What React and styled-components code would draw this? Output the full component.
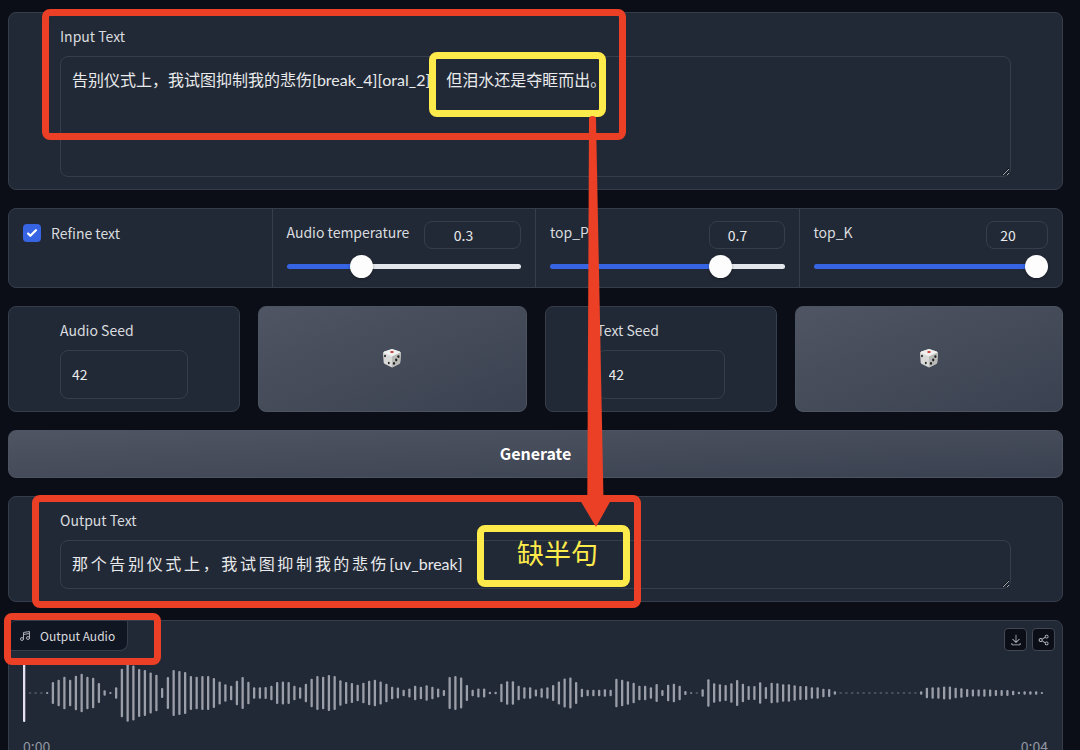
import { useState } from "react";
import styled, { createGlobalStyle } from "styled-components";
import { Music4 } from "lucide-react";

const GlobalStyle = createGlobalStyle`
  :root {
    --page: #0b0e17;
    --panel: #222936;
    --line: #363e4b;
    --text: #d9dbdf;
    --bright: #e8eaec;
    --accent: #3764e3;
    --red: #eb4025;
    --yellow: #fdea4b;
    color-scheme: dark;
  }

  * {
    box-sizing: border-box;
  }

  body {
    margin: 0;
    background: var(--page);
  }

  body, button, input {
    font-family: "Noto Sans CJK SC", "Noto Sans", sans-serif;
  }
`;

const Page = styled.div`
  position: relative;
  display: flex;
  flex-direction: column;
  gap: 18px;
  height: 100vh;
  padding: 12px 17px 0 8px;
  overflow: hidden;
  color: var(--text);
  font-size: 14px;
  line-height: 24px;

  > * {
    flex-shrink: 0;
  }
`;

const Panel = styled.section`
  display: flex;
  flex-direction: column;
  gap: 8px;
  padding: 11px 51px 12px;
  background: var(--panel);
  border: 1px solid var(--line);
  border-radius: 8px;
`;

const TextArea = styled.textarea`
  display: block;
  width: 100%;
  height: ${(props) => (props.$tall ? 121 : 49)}px;
  padding: 11px;
  overflow: hidden;
  color: var(--bright);
  background: transparent;
  border: 1px solid var(--line);
  border-radius: 8px;
  outline: none;
  font-family: Lato, "Noto Sans CJK SC", sans-serif;
  font-size: 16px;
  line-height: 24px;
  resize: vertical;
`;

const SeedInput = styled.input`
  width: 100%;
  height: 49px;
  padding: 0 11px 2px;
  color: var(--bright);
  background: transparent;
  border: 1px solid var(--line);
  border-radius: 8px;
  outline: none;
  font-size: 14px;
  appearance: textfield;

  &::-webkit-inner-spin-button {
    display: none;
  }
`;

const Settings = styled.section`
  display: grid;
  grid-template-columns: repeat(4, 1fr);
  gap: 1px;
  overflow: hidden;
  background: var(--line);
  border: 1px solid var(--line);
  border-radius: 8px;
`;

const Cell = styled.div`
  height: 78px;
  padding: 12px 14px;
  background: var(--panel);
`;

const CheckLabel = styled.label`
  display: flex;
  align-items: center;
  gap: 10px;
`;

const CheckBox = styled.input`
  width: 18px;
  height: 18px;
  margin: 0;
  appearance: none;
  border-radius: 4px;
  background: var(--accent)
    url("data:image/svg+xml,%3Csvg viewBox='0 0 16 16' fill='white' xmlns='http://www.w3.org/2000/svg'%3E%3Cpath d='M12.207 4.793a1 1 0 010 1.414l-5 5a1 1 0 01-1.414 0l-2-2a1 1 0 011.414-1.414L6.5 9.086l4.293-4.293a1 1 0 011.414 0z'/%3E%3C/svg%3E")
    center / 18px no-repeat;
`;

const SliderHead = styled.div`
  display: flex;
  justify-content: space-between;
  align-items: flex-start;
  height: 33px;

  label {
    line-height: 22px;
  }
`;

const NumberInput = styled.input`
  width: ${(props) => props.$width}px;
  height: 28px;
  padding: 0 18px 0 0;
  color: var(--bright);
  background: transparent;
  border: 1px solid var(--line);
  border-radius: 8px;
  outline: none;
  font-size: 14px;
  text-align: center;
  appearance: textfield;

  &::-webkit-inner-spin-button {
    display: none;
  }
`;

const Range = styled.input`
  display: block;
  width: 100%;
  height: 24px;
  margin: 0;
  appearance: none;
  background: transparent;

  &::-webkit-slider-runnable-track {
    height: 5px;
    border-radius: 3px;
    background: linear-gradient(
      to right,
      var(--accent) var(--fill),
      #e3e6ea var(--fill)
    );
  }

  &::-webkit-slider-thumb {
    width: 23px;
    height: 23px;
    margin-top: -9px;
    appearance: none;
    border-radius: 50%;
    background: #fdfdfd;
    box-shadow: 0 1px 3px rgba(0, 0, 0, 0.3);
  }
`;

const SeedRow = styled.div`
  display: grid;
  grid-template-columns: 232fr 268fr 232fr 268fr;
  gap: 18px;
`;

const Button = styled.button`
  display: flex;
  justify-content: center;
  align-items: center;
  min-height: 48px;
  padding: 0 0 2px;
  color: #fff;
  background: linear-gradient(to bottom right, #4f5562, #3a4150);
  border: 1px solid #4c5461;
  border-radius: 8px;
  font-size: 16px;
  font-weight: 600;
`;

const AudioPanel = styled.section`
  height: 190px;
  background: var(--panel);
  border: 1px solid var(--line);
  border-radius: 8px;
  overflow: hidden;
`;

const AudioBar = styled.div`
  display: flex;
  justify-content: space-between;
  align-items: flex-start;
  height: 43px;
`;

const AudioTag = styled.div`
  display: flex;
  align-items: center;
  gap: 9px;
  height: 30px;
  padding: 0 12px 0 10px;
  background: #111623;
  border-right: 1px solid var(--line);
  border-bottom: 1px solid var(--line);
  border-bottom-right-radius: 8px;
  color: var(--text);
  font-size: 12px;
`;

const Tools = styled.div`
  display: flex;
  gap: 5px;
  padding: 7px 7px 0 0;
`;

const ToolButton = styled.button`
  display: flex;
  justify-content: center;
  align-items: center;
  width: 23px;
  height: 23px;
  padding: 0;
  color: #c4c8ce;
  background: var(--page);
  border: 1px solid #424955;
  border-radius: 4px;
`;

const Wave = styled.svg`
  display: block;
  width: calc(100% - 28px);
  height: 58px;
  margin: 0 14px;
`;

const Times = styled.div`
  display: flex;
  justify-content: space-between;
  padding: 12px 14px;
  color: #9197a1;
  font-size: 14px;
`;

// hand drawn style markup lying over the page
const Mark = styled.div`
  position: absolute;
  display: flex;
  justify-content: center;
  align-items: center;
  left: ${(props) => props.$x}px;
  top: ${(props) => props.$y}px;
  width: ${(props) => props.$w}px;
  height: ${(props) => props.$h}px;
  padding: 0 0 6px 8px;
  border: 7px solid var(--${(props) => props.$color});
  border-radius: 8px;
  color: var(--yellow);
  font-size: 27px;
  pointer-events: none;
`;

const Arrow = styled.svg`
  position: absolute;
  left: 580px;
  top: 115px;
  pointer-events: none;
`;

const sliders = [
  { id: "temperature", label: "Audio temperature", min: 0, max: 1, step: 0.1, start: 0.3, width: 97 },
  { id: "top-p", label: "top_P", min: 0.1, max: 0.9, step: 0.1, start: 0.7, width: 76 },
  { id: "top-k", label: "top_K", min: 1, max: 20, step: 1, start: 20, width: 62 },
];

// words come back one by one, joined with narrow spaces
const output = [..."那个告别仪式上，我试图抑制我的悲伤", "[uv_break]"].join("\u2006");

// bar heights, in thirds of a pixel
const bars = [
  174, 2, 2, 2, 6, 66, 79, 97, 79, 103, 116, 97, 91, 60, 17, 6, 35, 145, 172,
  165, 144, 138, 123, 109, 30, 96, 138, 132, 126, 102, 97, 102, 102, 90, 69,
  52, 44, 74, 96, 68, 35, 35, 36, 44, 66, 69, 66, 44, 34, 56, 85, 102, 98, 108,
  102, 76, 66, 60, 50, 62, 73, 79, 69, 55, 38, 33, 20, 27, 44, 38, 46, 37, 27,
  18, 96, 102, 93, 48, 19, 27, 27, 8, 8, 55, 70, 71, 44, 35, 34, 21, 28, 34,
  48, 69, 87, 93, 66, 26, 20, 20, 20, 22, 20, 85, 79, 70, 62, 44, 43, 35, 54,
  18, 50, 56, 44, 12, 5, 2, 22, 83, 58, 52, 48, 58, 78, 55, 42, 42, 64, 36, 62,
  59, 52, 52, 46, 42, 42, 35, 35, 26, 24, 10, 2, 2, 2, 2, 2, 2, 2, 2, 2, 2, 2,
  2, 2, 2, 10, 31, 35, 35, 39, 39, 31, 28, 24, 21, 21, 22, 21, 18, 18, 18, 14,
  8, 10, 10, 10, 6,
];

const Slider = ({ id, label, min, max, step, start, width }) => {
  const [value, setValue] = useState(start);
  const fill = ((value - min) / (max - min)) * 100;
  const change = (e) => setValue(e.target.value);

  return (
    <Cell>
      <SliderHead>
        <label htmlFor={id}>{label}</label>
        <NumberInput
          id={id}
          type="number"
          min={min}
          max={max}
          step={step}
          value={value}
          onChange={change}
          $width={width}
        />
      </SliderHead>
      <Range
        type="range"
        aria-label={label}
        min={min}
        max={max}
        step={step}
        value={value}
        onChange={change}
        style={{ "--fill": `${fill}%` }}
      />
    </Cell>
  );
};

const Dice = () => (
  <svg width="20" height="20" viewBox="0 0 20 20">
    <path d="M10 1 17.6 3.4Q19 4 18.9 5.4L18.2 14.2Q18 15.3 17 15.9L11 19Q10 19.4 9 19L2.8 16Q1.8 15.4 1.7 14.2L1 5.4Q1 4 2.4 3.4Z" fill="#d9dad7" />
    <path d="M10 1 17.6 3.4Q19 4 18 4.9L10 8.4 2 4.9Q1 4 2.4 3.4Z" fill="#f0f0ee" />
    <path d="M10 8.4 18.4 4.6Q19 5 18.9 5.8L18.2 14.2Q18 15.3 17 15.9L10.6 19.2Q10 19.3 9.8 19Z" fill="#b9bab6" />
    <ellipse cx="10" cy="4" rx="1.8" ry="0.9" fill="#c93b36" />
    <g fill="#202124">
      <ellipse cx="3" cy="8" rx="0.9" ry="1.3" />
      <ellipse cx="6.8" cy="15" rx="0.9" ry="1.3" />
      <ellipse cx="16.4" cy="8.6" rx="1.1" ry="1.4" />
      <ellipse cx="14.2" cy="12" rx="1.1" ry="1.4" />
      <ellipse cx="12" cy="15.4" rx="1.1" ry="1.4" />
    </g>
  </svg>
);

const Seed = ({ id, label }) => (
  <>
    <Panel>
      <label htmlFor={id}>{label}</label>
      <SeedInput id={id} type="number" defaultValue={42} />
    </Panel>
    <Button aria-label={`Random ${label}`}>
      <Dice />
    </Button>
  </>
);

const App = () => {
  return (
    <Page>
      <GlobalStyle />
      <Panel>
        <label htmlFor="input-text">Input Text</label>
        <TextArea
          id="input-text"
          $tall
          spellCheck={false}
          defaultValue="告别仪式上，我试图抑制我的悲伤[break_4][oral_2]，但泪水还是夺眶而出。"
        />
      </Panel>

      <Settings>
        <Cell>
          <CheckLabel>
            <CheckBox type="checkbox" defaultChecked />
            Refine text
          </CheckLabel>
        </Cell>
        {sliders.map((slider) => (
          <Slider key={slider.id} {...slider} />
        ))}
      </Settings>

      <SeedRow>
        <Seed id="audio-seed" label="Audio Seed" />
        <Seed id="text-seed" label="Text Seed" />
      </SeedRow>

      <Button>Generate</Button>

      <Panel>
        <label htmlFor="output-text">Output Text</label>
        <TextArea id="output-text" readOnly spellCheck={false} value={output} />
      </Panel>

      <AudioPanel>
        <AudioBar>
          <AudioTag>
            <Music4 size={12} strokeWidth={2} color="#a9adb5" />
            Output Audio
          </AudioTag>
          <Tools>
            <ToolButton aria-label="Download">
              <svg width="12" height="12" viewBox="0 0 32 32" fill="currentColor">
                <path d="M26 24v4H6v-4H4v4a2 2 0 0 0 2 2h20a2 2 0 0 0 2-2v-4zm0-10l-1.41-1.41L17 20.17V2h-2v18.17l-7.59-7.58L6 14l10 10z" />
              </svg>
            </ToolButton>
            <ToolButton aria-label="Share">
              <svg width="12" height="12" viewBox="0 0 32 32" fill="currentColor">
                <path d="M23 20a5 5 0 0 0-3.89 1.89l-7.31-4.57a4.46 4.46 0 0 0 0-2.64l7.31-4.57A5 5 0 1 0 18 7a4.79 4.79 0 0 0 .2 1.32l-7.31 4.57a5 5 0 1 0 0 6.22l7.31 4.57A4.79 4.79 0 0 0 18 25a5 5 0 1 0 5-5Zm0-16a3 3 0 1 1-3 3a3 3 0 0 1 3-3ZM7 19a3 3 0 1 1 3-3a3 3 0 0 1-3 3Zm16 9a3 3 0 1 1 3-3a3 3 0 0 1-3 3Z" />
              </svg>
            </ToolButton>
          </Tools>
        </AudioBar>
        <Wave viewBox="0 0 1025 58" preserveAspectRatio="none">
          {bars.map((height, i) => (
            <rect
              key={i}
              x={i * 5.75}
              y={29 - height / 6}
              width="2.3"
              height={height / 3}
              rx={height > 2 ? 1 : 0}
              fill={i === 0 ? "#e4e0f2" : "#9a9ea8"}
            />
          ))}
        </Wave>
        <Times>
          <span>0:00</span>
          <span>0:04</span>
        </Times>
      </AudioPanel>

      <Mark $color="red" $x={42} $y={9} $w={584} $h={131} />
      <Mark $color="yellow" $x={429} $y={52} $w={177} $h={65} />
      <Mark $color="red" $x={32} $y={495} $w={609} $h={113} />
      <Mark $color="yellow" $x={477} $y={525} $w={153} $h={62}>
        缺半句
      </Mark>
      <Mark $color="red" $x={4} $y={613} $w={157} $h={52} />
      <Arrow width="32" height="412" viewBox="0 0 32 412" fill="var(--red)">
        <path d="M9 4Q9 1 12.500 1Q16 1 16 4L23.500 385H31L16 412 0 385H7.300Z" />
      </Arrow>
    </Page>
  );
};

export default App;
